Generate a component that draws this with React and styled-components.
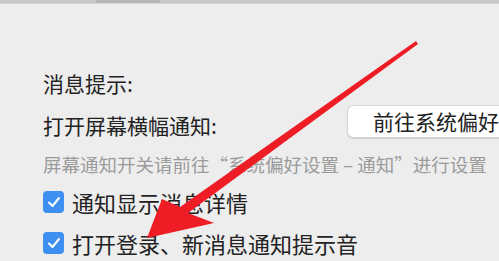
import React from "react";
import styled, { createGlobalStyle } from "styled-components";

const GlobalStyle = createGlobalStyle`
  html, body {
    margin: 0;
    padding: 0;
    width: 499px;
    height: 261px;
    overflow: hidden;
    background: #ededed;
  }
  body {
    font-family: "Noto Sans CJK SC", "Noto Sans", sans-serif;
    color: #222;
  }
`;

const Page = styled.div`
  position: relative;
  width: 499px;
  height: 261px;
  overflow: hidden;
  background: #ededed;
`;

const TopBar = styled.div`
  height: 3px;
  background: #c7c7c7;
  border-bottom: 1px solid #d6d6d6;
  display: flex;
`;

const TopTab = styled.div`
  margin-left: 96px;
  width: 64px;
  height: 3px;
  background: #b6b6b6;
`;

const Content = styled.div`
  padding: 64px 0 0 43px;
  display: flex;
  flex-direction: column;
`;

const Title = styled.div`
  font-size: 21px;
  line-height: 30px;
  color: #222;
`;

const Row = styled.div`
  display: flex;
  align-items: flex-start;
  margin-top: 7px;
  height: 33px;
`;

const Label = styled.div`
  width: 304px;
  flex-shrink: 0;
  font-size: 21px;
  line-height: 30px;
  margin-top: 5px;
  color: #222;
`;

const PrefButton = styled.div`
  flex-shrink: 0;
  width: 160px;
  height: 33px;
  box-sizing: border-box;
  background: #ffffff;
  border: 1px solid #d4d4d4;
  border-right: none;
  border-radius: 6px 0 0 6px;
  box-shadow: 0 1px 1px rgba(0, 0, 0, 0.12);
  padding-left: 25px;
  font-size: 21px;
  line-height: 31px;
  white-space: nowrap;
  overflow: hidden;
  color: #222;
`;

const Hint = styled.div`
  margin-top: 13px;
  font-size: 18.5px;
  line-height: 26px;
  color: #9b9b9b;
  white-space: nowrap;
`;

const CheckRow = styled.div`
  display: flex;
  align-items: center;
  gap: 8px;
  height: 30px;
  margin-top: ${(p) => p.$gap}px;
`;

const Box = styled.span`
  width: 21px;
  height: 22px;
  border-radius: 4px;
  background: #3d8ff0;
  display: flex;
  align-items: center;
  justify-content: center;
  flex-shrink: 0;
`;

const CheckText = styled.span`
  font-size: 22px;
  line-height: 30px;
  white-space: nowrap;
  color: #222;
`;

const Overlay = styled.svg`
  position: absolute;
  left: 0;
  top: 0;
  pointer-events: none;
`;

function Check({ label, gap }) {
  return (
    <CheckRow $gap={gap}>
      <Box>
        <svg width="14" height="12" viewBox="0 0 14 12">
          <path d="M2 6.5 L5.5 10 L12 2" fill="none" stroke="#fff" strokeWidth="2" strokeLinecap="round" strokeLinejoin="round" />
        </svg>
      </Box>
      <CheckText>{label}</CheckText>
    </CheckRow>
  );
}

export default function App() {
  return (
    <Page>
      <GlobalStyle />
      <TopBar>
        <TopTab />
      </TopBar>
      <Content>
        <Title>消息提示:</Title>
        <Row>
          <Label>打开屏幕横幅通知:</Label>
          <PrefButton>前往系统偏好</PrefButton>
        </Row>
        <Hint>屏幕通知开关请前往“系统偏好设置 – 通知”进行设置</Hint>
        <Check label="通知显示消息详情" gap={10} />
        <Check label="打开登录、新消息通知提示音" gap={11} />
      </Content>
      <Overlay width="499" height="261" viewBox="0 0 499 261">
        <polygon
          points="147,238 162,199 180,207 416,41 418,44 188,213 214,223"
          fill="#ee1c25"
        />
      </Overlay>
    </Page>
  );
}
